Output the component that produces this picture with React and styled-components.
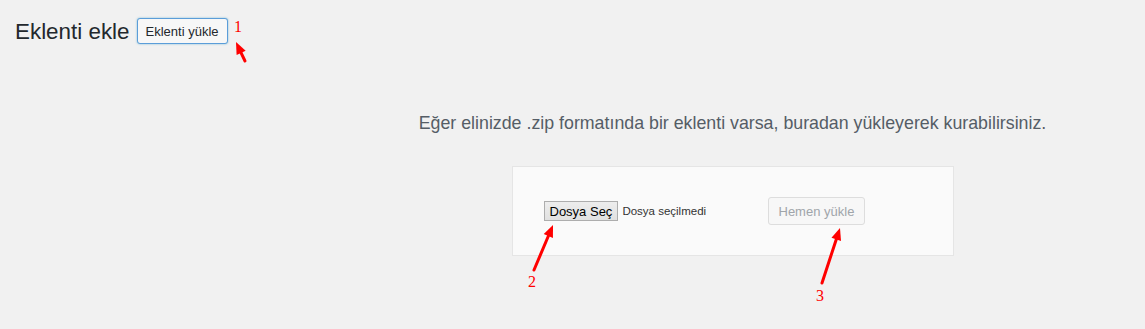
import React from 'react';
import styled, { createGlobalStyle } from 'styled-components';

const GlobalStyle = createGlobalStyle`
  html, body {
    margin: 0;
    padding: 0;
    background: #f1f1f1;
    font-family: "Liberation Sans", Arial, sans-serif;
  }
`;

const Page = styled.div`
  position: relative;
  width: 1145px;
  height: 329px;
  overflow: hidden;
  background: #f1f1f1;
`;

const Header = styled.div`
  display: flex;
  align-items: center;
  gap: 7px;
  padding: 18px 0 0 15px;
  height: 26px;
`;

const Title = styled.h1`
  margin: 0;
  font-size: 22.4px;
  font-weight: 400;
  color: #23282d;
  line-height: 26px;
  position: relative;
  top: 1px;
`;

const TitleAction = styled.button`
  height: 26px;
  padding: 0 8px;
  font-family: inherit;
  font-size: 13px;
  color: #23282d;
  background: #f7f7f7;
  border: 1px solid #5b9dd9;
  border-radius: 3px;
  box-shadow: 0 0 2px rgba(30, 140, 190, 0.6);
`;

const Upload = styled.div`
  display: flex;
  flex-direction: column;
  align-items: center;
  padding-left: 320px;
  padding-top: 67px;
`;

const Help = styled.p`
  margin: 0;
  font-size: 17.8px;
  line-height: 24px;
  color: #555d66;
  text-align: center;
`;

const Form = styled.div`
  margin-top: 31px;
  width: 380px;
  padding: 30px;
  background: #fafafa;
  border: 1px solid #e5e5e5;
  display: flex;
  align-items: center;
  height: 28px;
`;

const FileField = styled.div`
  width: 224px;
  display: flex;
  align-items: center;
  gap: 4px;
  padding-left: 1px;
`;

const FileButton = styled.button`
  height: 20px;
  padding: 0 5px;
  font-family: "Liberation Sans", Arial, sans-serif;
  font-size: 13px;
  color: #000;
  background: linear-gradient(#ededed, #e1e1e1);
  border: 1px solid #adadad;
  border-radius: 0;
`;

const FileStatus = styled.span`
  font-size: 11.5px;
  color: #333;
`;

const SubmitButton = styled.button`
  height: 28px;
  padding: 0 10px;
  font-family: inherit;
  font-size: 13px;
  color: #a0a5aa;
  background: #f7f7f7;
  border: 1px solid #ddd;
  border-radius: 3px;
`;

const Marker = styled.span`
  position: absolute;
  left: ${p => p.x}px;
  top: ${p => p.y}px;
  color: #ff0000;
  font-family: "Liberation Serif", serif;
  font-size: 16px;
  line-height: 16px;
`;

const Arrows = styled.svg`
  position: absolute;
  left: 0;
  top: 0;
  pointer-events: none;
`;

function Arrow({ x1, y1, x2, y2 }) {
  const dx = x2 - x1;
  const dy = y2 - y1;
  const len = Math.sqrt(dx * dx + dy * dy);
  const ux = dx / len;
  const uy = dy / len;
  const head = 12;
  const half = 5;
  const bx = x2 - ux * head;
  const by = y2 - uy * head;
  const p1 = `${bx - uy * half},${by + ux * half}`;
  const p2 = `${bx + uy * half},${by - ux * half}`;
  return (
    <g>
      <line x1={x1} y1={y1} x2={bx + ux * 2} y2={by + uy * 2} stroke="#ff0000" strokeWidth="3" strokeLinecap="round" />
      <polygon points={`${x2},${y2} ${p1} ${p2}`} fill="#ff0000" />
    </g>
  );
}

export default function App() {
  return (
    <Page>
      <GlobalStyle />
      <Header>
        <Title>Eklenti ekle</Title>
        <TitleAction>Eklenti yükle</TitleAction>
      </Header>
      <Upload>
        <Help>Eğer elinizde .zip formatında bir eklenti varsa, buradan yükleyerek kurabilirsiniz.</Help>
        <Form>
          <FileField>
            <FileButton>Dosya Seç</FileButton>
            <FileStatus>Dosya seçilmedi</FileStatus>
          </FileField>
          <SubmitButton disabled>Hemen yükle</SubmitButton>
        </Form>
      </Upload>

      <Arrows width="1145" height="329">
        <Arrow x1={245} y1={61} x2={236} y2={42} />
        <Arrow x1={534} y1={270} x2={553} y2={225} />
        <Arrow x1={822} y1={283} x2={840} y2={228} />
      </Arrows>
      <Marker x={234} y={19}>1</Marker>
      <Marker x={528} y={274}>2</Marker>
      <Marker x={816} y={288}>3</Marker>
    </Page>
  );
}
